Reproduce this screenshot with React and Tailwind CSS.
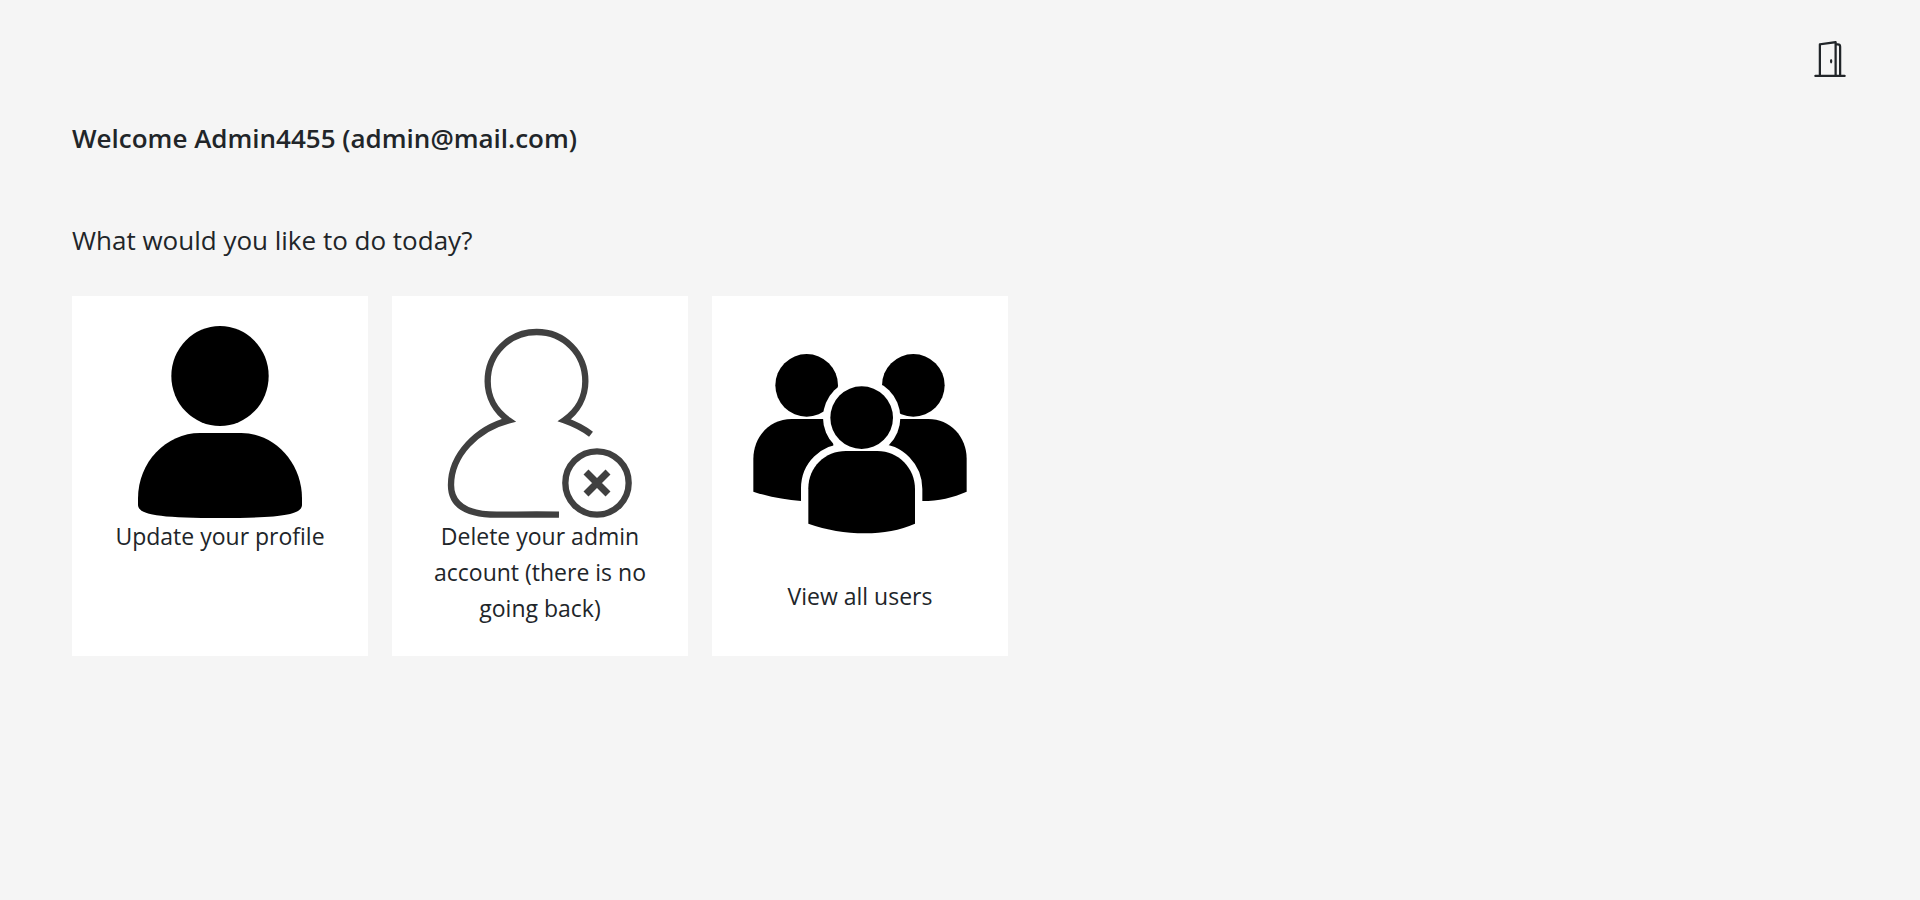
import { BsDoorOpen } from "react-icons/bs";

function ProfileIcon() {
  return (
    <svg viewBox="234 123 492 576" className="h-48" fill="#000" aria-hidden="true">
      <ellipse cx="480" cy="273" rx="146" ry="150" />
      <path d="M420 444H544C642 444 726 532 726 640V659C726 690 662 699 480 699S234 690 234 659V640C234 532 318 444 420 444Z" />
    </svg>
  );
}

function DeleteAccountIcon() {
  return (
    <svg
      viewBox="192 123 576 576"
      className="h-48"
      fill="none"
      stroke="#404040"
      strokeWidth="19"
      aria-hidden="true"
    >
      <path
        strokeMiterlimit="10"
        d="M537 689C470 688 410 689 350 689C270 689 213 667 213 600C213 510 292 430 386 406C347 379 323 337 323 289C323 205 388 141 470 141S616 205 616 289C616 337 592 379 553 406C584 417 610 430 633 448"
      />
      <circle cx="651" cy="594" r="95" />
      <path strokeWidth="21" d="M618 561L684 627M684 561L618 627" />
    </svg>
  );
}

function UsersIcon() {
  const body =
    "M325 716V610C325 546 375 498 438 498H532C596 498 645 550 645 612V716C600 736 550 745 495 745C435 745 380 735 325 716Z";
  return (
    <svg viewBox="126 123 708 756" className="h-[252px]" fill="#000" aria-hidden="true">
      <circle cx="320" cy="301" r="94" />
      <circle cx="640" cy="301" r="94" />
      <path d="M160 620V522C160 454 210 402 275 402H400V648H303C255 645 205 635 160 620Z" />
      <path d="M800 620V522C800 454 750 402 685 402H560V648H667C715 648 760 638 800 620Z" />
      <circle cx="485" cy="398" r="116" fill="#fff" />
      <path d={body} stroke="#fff" strokeWidth="44" />
      <circle cx="485" cy="398" r="94" />
      <path d={body} />
    </svg>
  );
}

const actions = [
  { label: "Update your profile", Icon: ProfileIcon },
  { label: "Delete your admin account (there is no going back)", Icon: DeleteAccountIcon },
  { label: "View all users", Icon: UsersIcon },
];

export default function App() {
  return (
    <div className="min-h-screen bg-[#f5f5f5] px-[72px] pt-[41px] pb-10 font-['Segoe_UI','Open_Sans',sans-serif] text-[#212529]">
      <header className="flex justify-end">
        <button type="button" aria-label="Log out">
          <BsDoorOpen className="size-9" />
        </button>
      </header>
      <main>
        <h1 className="mt-11 text-[26px] leading-[34px] font-semibold">
          Welcome Admin4455 (admin@mail.com)
        </h1>
        <h2 className="mt-[68px] text-[26px] leading-[34px]">What would you like to do today?</h2>
        <nav className="mt-[39px] flex flex-wrap gap-6">
          {actions.map(({ label, Icon }) => (
            <a
              key={label}
              href="#"
              className="flex w-[296px] flex-col items-center bg-white p-[30px] text-center text-[23px] leading-9"
            >
              <Icon />
              <span>{label}</span>
            </a>
          ))}
        </nav>
      </main>
    </div>
  );
}
